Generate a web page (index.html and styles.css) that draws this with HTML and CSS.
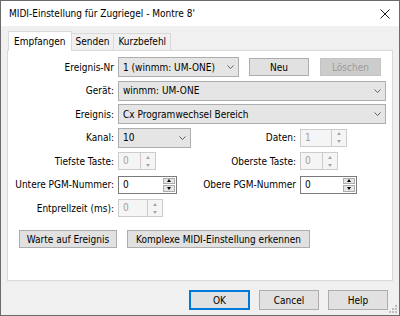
FILE: index.html
```html
<!DOCTYPE html>
<html lang="de">
<head>
  <meta charset="UTF-8">
  <title>MIDI-Einstellung</title>
  <link rel="stylesheet" href="styles.css">
</head>
<body>

  <div class="window">
    <div class="titlebar">
      <span class="title">MIDI-Einstellung für Zugriegel - Montre 8'</span>
      <svg class="close" width="10" height="10" viewBox="0 0 10 10">
        <path d="M0.5 0.5L9.5 9.5M9.5 0.5L0.5 9.5" stroke="#1a1a1a" stroke-width="1" fill="none"/>
      </svg>
    </div>

    <div class="client">
      <div class="tabs">
        <div class="tab active">Empfangen</div>
        <div class="tab">Senden</div>
        <div class="tab">Kurzbefehl</div>
      </div>

      <div class="panel">
        <div class="form">
          <!-- Ereignis-Nr -->
          <div class="lbl">Ereignis-Nr</div>
          <div class="span3">
            <div class="combo c-nr">
              <span>1 (winmm: UM-ONE)</span>
              <svg width="7" height="4" viewBox="0 0 7 4"><polyline points="0.5,0.5 3.5,3.5 6.5,0.5" fill="none" stroke="#606060"/></svg>
            </div>
            <button class="btn btn-neu">Neu</button>
            <button class="btn btn-del" disabled>Löschen</button>
          </div>

          <div class="lbl">Gerät:</div>
          <div class="span3">
            <div class="combo c-full">
              <span>winmm: UM-ONE</span>
              <svg width="7" height="4" viewBox="0 0 7 4"><polyline points="0.5,0.5 3.5,3.5 6.5,0.5" fill="none" stroke="#606060"/></svg>
            </div>
          </div>

          <div class="lbl">Ereignis:</div>
          <div class="span3">
            <div class="combo c-full">
              <span>Cx Programwechsel Bereich</span>
              <svg width="7" height="4" viewBox="0 0 7 4"><polyline points="0.5,0.5 3.5,3.5 6.5,0.5" fill="none" stroke="#606060"/></svg>
            </div>
          </div>

          <!-- Kanal / Daten -->
          <div class="lbl">Kanal:</div>
          <div class="cell">
            <div class="combo c-kanal">
              <span>10</span>
              <svg width="7" height="4" viewBox="0 0 7 4"><polyline points="0.5,0.5 3.5,3.5 6.5,0.5" fill="none" stroke="#606060"/></svg>
            </div>
          </div>
          <div class="lbl">Daten:</div>
          <div class="cell">
            <div class="spin w47"><span class="val">1</span><span class="arrows"><span class="up"></span><span class="down"></span></span></div>
          </div>

          <div class="lbl">Tiefste Taste:</div>
          <div class="cell">
            <div class="spin w38"><span class="val">0</span><span class="arrows"><span class="up"></span><span class="down"></span></span></div>
          </div>
          <div class="lbl">Oberste Taste:</div>
          <div class="cell">
            <div class="spin w38"><span class="val">0</span><span class="arrows"><span class="up"></span><span class="down"></span></span></div>
          </div>

          <div class="lbl">Untere PGM-Nummer:</div>
          <div class="cell">
            <div class="spin on w59"><span class="val">0</span><span class="arrows"><span class="up"></span><span class="down"></span></span></div>
          </div>
          <div class="lbl">Obere PGM-Nummer</div>
          <div class="cell">
            <div class="spin on w57"><span class="val">0</span><span class="arrows"><span class="up"></span><span class="down"></span></span></div>
          </div>

          <div class="lbl">Entprellzeit (ms):</div>
          <div class="cell">
            <div class="spin w45"><span class="val">0</span><span class="arrows"><span class="up"></span><span class="down"></span></span></div>
          </div>
        </div>

        <div class="actions">
          <button class="btn btn-warte">Warte auf Ereignis</button>
          <button class="btn btn-komplex">Komplexe MIDI-Einstellung erkennen</button>
        </div>
      </div>

      <div class="footer">
        <button class="btn default">OK</button>
        <button class="btn">Cancel</button>
        <button class="btn">Help</button>
      </div>
    </div>

    <svg class="grip" width="11" height="11" viewBox="0 0 11 11">
      <rect x="8" y="2" width="2" height="2" fill="#bdbdbd"/>
      <rect x="8" y="5" width="2" height="2" fill="#bdbdbd"/>
      <rect x="5" y="5" width="2" height="2" fill="#bdbdbd"/>
      <rect x="8" y="8" width="2" height="2" fill="#bdbdbd"/>
      <rect x="5" y="8" width="2" height="2" fill="#bdbdbd"/>
      <rect x="2" y="8" width="2" height="2" fill="#bdbdbd"/>
    </svg>
  </div>

</body>
</html>
```

FILE: styles.css
```css
body {
  margin: 0;
  font-family: "DejaVu Sans Condensed", "DejaVu Sans", sans-serif;
  font-size: 10px;
  color: #000;
}

.window {
  position: relative;
  width: 400px;
  height: 316px;
  box-sizing: border-box;
  border: 1px solid #6b6b6b;
  background: #f0f0f0;
}

.titlebar {
  height: 25px;
  background: #fff;
  display: flex;
  align-items: center;
  justify-content: space-between;
  padding: 0 9px 0 8px;
}

.client {
  padding: 5px 6px 0 6px;
}

/* tabs */
.tabs {
  display: flex;
  align-items: flex-end;
  height: 19px;
  padding-left: 1px;
}

.tab {
  height: 17px;
  box-sizing: border-box;
  padding: 0 4px;
  border: 1px solid #d9d9d9;
  border-bottom: 0;
  line-height: 16px;
  margin-left: -1px;
}

.tab.active {
  position: relative;
  height: 20px;
  margin-left: 0;
  margin-bottom: -1px;
  padding: 0 5px;
  line-height: 19px;
  background: #fff;
}

.panel {
  height: 231px;
  box-sizing: border-box;
  background: #fff;
  border: 1px solid #d9d9d9;
  padding-top: 6px;
}

/* form grid */
.form {
  display: grid;
  grid-template-columns: 110px 82px 100px 1fr;
  grid-auto-rows: 20px;
  row-gap: 3.5px;
}

.lbl {
  align-self: center;
  text-align: right;
  padding-right: 4px;
  white-space: nowrap;
}

.span3 {
  grid-column: 2 / 5;
  display: flex;
  align-items: center;
}

.cell {
  display: flex;
  align-items: center;
}

.combo {
  box-sizing: border-box;
  height: 20px;
  border: 1px solid #adadad;
  background: #e5e5e5;
  display: flex;
  align-items: center;
  justify-content: space-between;
  padding: 0 4px 0 4px;
  white-space: nowrap;
}

.c-nr { width: 121px; }
.c-full { width: 268px; }
.c-kanal { width: 73px; }

.btn {
  box-sizing: border-box;
  height: 18px;
  padding: 0;
  border: 1px solid #adadad;
  background: #e1e1e1;
  font: inherit;
  color: #000;
  white-space: nowrap;
}

.btn:disabled {
  background: #cccccc;
  border-color: #c4c4c4;
  color: #9c9c9c;
}

.btn-neu { width: 60px; margin-left: 10px; }
.btn-del { width: 61px; margin-left: 11px; }

/* spin boxes */
.spin {
  box-sizing: border-box;
  height: 18px;
  display: flex;
  border: 1px solid #cccccc;
  background: #f5f5f5;
}

.spin .val {
  flex: 1;
  padding-left: 4px;
  line-height: 16px;
  color: #a0a0a0;
}

.spin .arrows {
  width: 14px;
  border-left: 1px solid #cccccc;
  display: flex;
  flex-direction: column;
}

.arrows span {
  flex: 1;
  display: flex;
  align-items: center;
  justify-content: center;
}

.arrows .up::before {
  content: "";
  border-left: 2.5px solid transparent;
  border-right: 2.5px solid transparent;
  border-bottom: 3px solid #a6a6a6;
}

.arrows .down::before {
  content: "";
  border-left: 2.5px solid transparent;
  border-right: 2.5px solid transparent;
  border-top: 3px solid #a6a6a6;
}

.spin.on {
  border-color: #7a7a7a;
  background: #fff;
}

.spin.on .val { color: #000; }

.spin.on .arrows {
  width: 12px;
  border-left: 0;
  padding: 1px;
  gap: 1px;
}

.spin.on .arrows span {
  border: 1px solid #adadad;
  background: #e5e5e5;
}

.spin.on .up::before { border-bottom-color: #000; }
.spin.on .down::before { border-top-color: #000; }

.w38 { width: 38px; }
.w45 { width: 45px; }
.w47 { width: 47px; }
.w57 { width: 57px; }
.w59 { width: 59px; }

/* bottom buttons */
.actions {
  display: flex;
  gap: 10px;
  margin: 12px 0 0 11px;
}

.btn-warte { width: 98px; }
.btn-komplex { width: 183px; }

.footer {
  display: flex;
  justify-content: flex-end;
  gap: 9px;
  padding: 9px 5px 0 0;
}

.footer .btn {
  width: 60px;
  height: 20px;
}

.footer .btn.default {
  width: 61px;
  border-color: #0078d7;
  box-shadow: inset 0 0 0 1px #0078d7;
}

.grip {
  position: absolute;
  right: 1px;
  bottom: 1px;
}
```
